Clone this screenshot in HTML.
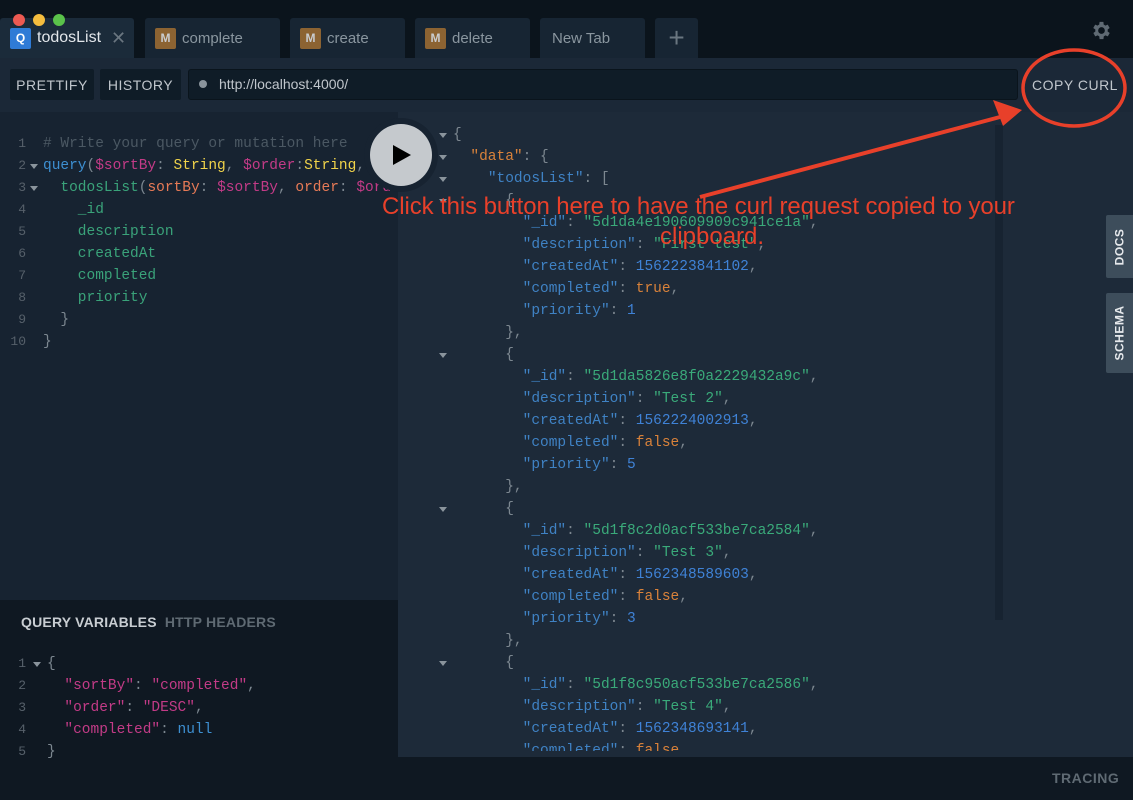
<!DOCTYPE html>
<html><head><meta charset="utf-8"><style>
*{margin:0;padding:0;box-sizing:border-box}
html{overflow:hidden;width:1133px;height:800px}
body{width:1133px;height:800px;overflow:hidden;background:#0f1822;font-family:"Liberation Sans",sans-serif;position:relative}
.abs{position:absolute}
.mono{font-family:"Liberation Mono",monospace;font-size:14.5px;white-space:normal}
.mono>div{white-space:pre;height:22px;position:relative}
.tab{position:absolute;top:18px;height:40px;background:#172533;color:#8a969f;font-size:15px;display:flex;align-items:center;border-radius:3px 3px 0 0}
.badge{width:21px;height:21px;border-radius:2px;color:#c9ccd0;font-size:12px;font-weight:bold;display:flex;align-items:center;justify-content:center;margin:0 6px 0 10px}
.btn{position:absolute;top:69px;height:31px;background:#0f1c27;color:#c0c6cc;font-size:14px;letter-spacing:.5px;display:flex;align-items:center;justify-content:center;border-radius:2px}
.ln{position:absolute;left:0;width:26px;text-align:right;color:#56606a;font-size:13px}
.c-com{color:#4b5863}.c-kw{color:#3d8fd1}.c-var{color:#c33b87}.c-typ{color:#f0d34a}.c-fn{color:#3aa37a}.c-arg{color:#e77a56}.c-p{color:#7c8790}
.k{color:#3f82c4}.s{color:#3aaa7a}.n{color:#3f82d6}.b{color:#d9823a}.o{color:#d9823a}.p{color:#7c8790}
.tri{position:absolute;width:0;height:0;border-left:4px solid transparent;border-right:4px solid transparent;border-top:5px solid #8a949c}
</style></head><body>
<div class="abs" style="left:0;top:0;width:1133px;height:58px;background:#0b141c"></div>
<div class="tab" style="left:0;width:134px;background:#1b2b3a;color:#e2e6ea;font-size:16px"><span class="badge" style="background:#2f7bd6;color:#fff;margin-left:10px">Q</span>todosList<span style="margin-left:10px;color:#6a7680;font-size:18px">✕</span></div>
<div class="tab" style="left:145px;width:135px"><span class="badge" style="background:#8c6332">M</span>complete</div>
<div class="tab" style="left:290px;width:115px"><span class="badge" style="background:#8c6332">M</span>create</div>
<div class="tab" style="left:415px;width:115px"><span class="badge" style="background:#8c6332">M</span>delete</div>
<div class="tab" style="left:540px;width:105px;padding-left:12px">New Tab</div>
<div class="tab" style="left:655px;width:43px;justify-content:center;font-size:28px;color:#6a7680">+</div>
<div class="abs" style="left:13px;top:14px;width:12px;height:12px;border-radius:50%;background:#ed5a52"></div>
<div class="abs" style="left:33px;top:14px;width:12px;height:12px;border-radius:50%;background:#f5bd3e"></div>
<div class="abs" style="left:53px;top:14px;width:12px;height:12px;border-radius:50%;background:#5ac24a"></div>
<svg class="abs" style="left:1090px;top:19px" width="23" height="23" viewBox="0 0 24 24"><path fill="#5f6a73" d="M19.4 13a7.5 7.5 0 0 0 0-2l2.1-1.6-2-3.5-2.5 1a7.6 7.6 0 0 0-1.700-1L15 3h-4l-.4 2.9a7.6 7.6 0 0 0-1.7 1l-2.5-1-2 3.5L6.6 11a7.5 7.5 0 0 0 0 2l-2.1 1.6 2 3.5 2.5-1a7.6 7.6 0 0 0 1.7 1L11 21h4l.4-2.9a7.6 7.6 0 0 0 1.7-1l2.5 1 2-3.5zM13 15.5a3.5 3.5 0 1 1 0-7 3.5 3.5 0 0 1 0 7z" transform="translate(-1 0)"/></svg>
<div class="abs" style="left:0;top:58px;width:1133px;height:54px;background:#1b2837"></div>
<div class="btn" style="left:10px;width:84px">PRETTIFY</div>
<div class="btn" style="left:100px;width:81px">HISTORY</div>
<div class="abs" style="left:188px;top:69px;width:830px;height:31px;background:#0f1c27;border:1px solid #0a141c;border-radius:3px;color:#c0c6cc;font-size:14px;line-height:29px;padding-left:30px">http://localhost:4000/</div>
<div class="abs" style="left:199px;top:80px;width:8px;height:8px;border-radius:50%;background:#8a949c"></div>
<div class="btn" style="left:1025px;width:100px;background:#1b2837">COPY CURL</div>
<div class="abs" style="left:0;top:112px;width:398px;height:488px;background:#172331"></div>
<div class="abs" style="left:398px;top:112px;width:735px;height:645px;background:#1d2a39"></div>
<div class="abs" style="left:995px;top:125px;width:8px;height:495px;background:#172331"></div>
<div class="abs" style="left:0;top:600px;width:398px;height:200px;background:#0f1822"></div>
<div class="abs" style="left:398px;top:757px;width:735px;height:43px;background:#0f1822"></div>
<div class="abs" style="left:1052px;top:770px;color:#5f6a73;font-size:14px;font-weight:bold;letter-spacing:.5px">TRACING</div>
<div class="abs" style="left:1106px;top:215px;width:27px;height:63px;background:#3d4d5b;border-radius:2px 0 0 2px"></div>
<div class="abs" style="left:1106px;top:293px;width:27px;height:80px;background:#3d4d5b;border-radius:2px 0 0 2px"></div>
<div class="abs" style="left:1106px;top:215px;width:27px;height:63px;display:flex;align-items:center;justify-content:center"><span style="transform:rotate(-90deg);color:#e6e9ec;font-size:12px;font-weight:bold;letter-spacing:.5px">DOCS</span></div>
<div class="abs" style="left:1106px;top:293px;width:27px;height:80px;display:flex;align-items:center;justify-content:center"><span style="transform:rotate(-90deg);color:#e6e9ec;font-size:12px;font-weight:bold;letter-spacing:.5px">SCHEMA</span></div>

<div class="abs mono" style="left:0;top:133px;line-height:22px;width:398px;overflow:hidden;height:230px"><div><span class="ln">1</span><span style="position:absolute;left:43px" class="c-com"># Write your query or mutation here</span></div><div><span class="ln">2</span><span class="tri" style="left:30px;top:9px"></span><span style="position:absolute;left:43px"><span class="c-kw">query</span><span class="c-p">(</span><span class="c-var">$sortBy</span><span class="c-p">: </span><span class="c-typ">String</span><span class="c-p">, </span><span class="c-var">$order</span><span class="c-p">:</span><span class="c-typ">String</span><span class="c-p">,</span></span></div><div><span class="ln">3</span><span class="tri" style="left:30px;top:9px"></span><span style="position:absolute;left:43px">  <span class="c-fn">todosList</span><span class="c-p">(</span><span class="c-arg">sortBy</span><span class="c-p">: </span><span class="c-var">$sortBy</span><span class="c-p">, </span><span class="c-arg">order</span><span class="c-p">: </span><span class="c-var">$order</span></span></div><div><span class="ln">4</span><span style="position:absolute;left:43px" class="c-fn">    _id</span></div><div><span class="ln">5</span><span style="position:absolute;left:43px" class="c-fn">    description</span></div><div><span class="ln">6</span><span style="position:absolute;left:43px" class="c-fn">    createdAt</span></div><div><span class="ln">7</span><span style="position:absolute;left:43px" class="c-fn">    completed</span></div><div><span class="ln">8</span><span style="position:absolute;left:43px" class="c-fn">    priority</span></div><div><span class="ln">9</span><span style="position:absolute;left:43px" class="c-p">  }</span></div><div><span class="ln">10</span><span style="position:absolute;left:43px" class="c-p">}</span></div></div>
<div class="abs" style="left:364px;top:118px;width:74px;height:74px;border-radius:50%;background:#172331"></div>
<div class="abs" style="left:370px;top:124px;width:62px;height:62px;border-radius:50%;background:#c5c9cd"></div>
<div class="abs" style="left:393px;top:145px;width:0;height:0;border-top:10px solid transparent;border-bottom:10px solid transparent;border-left:18px solid #000"></div>

<div class="abs" style="left:21px;top:614px;font-size:14px;font-weight:bold;color:#c8cdd2;letter-spacing:.2px">QUERY VARIABLES <span style="color:#5f6a73;margin-left:4px">HTTP HEADERS</span></div>
<div class="abs mono" style="left:0;top:653px;line-height:22px;width:398px"><div><span class="ln">1</span><span class="tri" style="left:33px;top:9px"></span><span style="position:absolute;left:47px" class="c-p">{</span></div><div><span class="ln">2</span><span style="position:absolute;left:47px">  <span class="c-var">"sortBy"</span><span class="c-p">: </span><span class="c-var">"completed"</span><span class="c-p">,</span></span></div><div><span class="ln">3</span><span style="position:absolute;left:47px">  <span class="c-var">"order"</span><span class="c-p">: </span><span class="c-var">"DESC"</span><span class="c-p">,</span></span></div><div><span class="ln">4</span><span style="position:absolute;left:47px">  <span class="c-var">"completed"</span><span class="c-p">: </span><span class="c-kw">null</span></span></div><div><span class="ln">5</span><span style="position:absolute;left:47px" class="c-p">}</span></div></div>

<div class="abs mono" style="left:453px;top:124px;line-height:22px;height:627px;overflow:hidden;width:540px"><div class="p">{</div><div>  <span class="o">"data"</span><span class="p">: {</span></div><div>    <span class="k">"todosList"</span><span class="p">: [</span></div><div class="p">      {</div><div>        <span class="k">"_id"</span><span class="p">: </span><span class="s">"5d1da4e190609909c941ce1a"</span><span class="p">,</span></div><div>        <span class="k">"description"</span><span class="p">: </span><span class="s">"First test"</span><span class="p">,</span></div><div>        <span class="k">"createdAt"</span><span class="p">: </span><span class="n">1562223841102</span><span class="p">,</span></div><div>        <span class="k">"completed"</span><span class="p">: </span><span class="b">true</span><span class="p">,</span></div><div>        <span class="k">"priority"</span><span class="p">: </span><span class="n">1</span></div><div class="p">      },</div><div class="p">      {</div><div>        <span class="k">"_id"</span><span class="p">: </span><span class="s">"5d1da5826e8f0a2229432a9c"</span><span class="p">,</span></div><div>        <span class="k">"description"</span><span class="p">: </span><span class="s">"Test 2"</span><span class="p">,</span></div><div>        <span class="k">"createdAt"</span><span class="p">: </span><span class="n">1562224002913</span><span class="p">,</span></div><div>        <span class="k">"completed"</span><span class="p">: </span><span class="b">false</span><span class="p">,</span></div><div>        <span class="k">"priority"</span><span class="p">: </span><span class="n">5</span></div><div class="p">      },</div><div class="p">      {</div><div>        <span class="k">"_id"</span><span class="p">: </span><span class="s">"5d1f8c2d0acf533be7ca2584"</span><span class="p">,</span></div><div>        <span class="k">"description"</span><span class="p">: </span><span class="s">"Test 3"</span><span class="p">,</span></div><div>        <span class="k">"createdAt"</span><span class="p">: </span><span class="n">1562348589603</span><span class="p">,</span></div><div>        <span class="k">"completed"</span><span class="p">: </span><span class="b">false</span><span class="p">,</span></div><div>        <span class="k">"priority"</span><span class="p">: </span><span class="n">3</span></div><div class="p">      },</div><div class="p">      {</div><div>        <span class="k">"_id"</span><span class="p">: </span><span class="s">"5d1f8c950acf533be7ca2586"</span><span class="p">,</span></div><div>        <span class="k">"description"</span><span class="p">: </span><span class="s">"Test 4"</span><span class="p">,</span></div><div>        <span class="k">"createdAt"</span><span class="p">: </span><span class="n">1562348693141</span><span class="p">,</span></div><div>        <span class="k">"completed"</span><span class="p">: </span><span class="b">false</span></div></div>
<span class="tri" style="left:439px;top:133px"></span>
<span class="tri" style="left:439px;top:155px"></span>
<span class="tri" style="left:439px;top:177px"></span>
<span class="tri" style="left:439px;top:199px"></span>
<span class="tri" style="left:439px;top:353px"></span>
<span class="tri" style="left:439px;top:507px"></span>
<span class="tri" style="left:439px;top:661px"></span>

<svg class="abs" style="left:0;top:0" width="1133" height="800">
<line x1="700" y1="197" x2="1000" y2="117" stroke="#e8402a" stroke-width="4"/>
<polygon points="1022,110 993,100 1003,126" fill="#e8402a"/>
<ellipse cx="1074" cy="88" rx="51" ry="38" fill="none" stroke="#e8402a" stroke-width="3.5"/>
</svg>
<div class="abs" style="left:382px;top:193px;font-size:24px;color:#e8402a;white-space:nowrap;letter-spacing:-0.1px">Click this button here to have the curl request copied to your</div>
<div class="abs" style="left:660px;top:223px;font-size:24px;color:#e8402a">clipboard.</div>
</body></html>
